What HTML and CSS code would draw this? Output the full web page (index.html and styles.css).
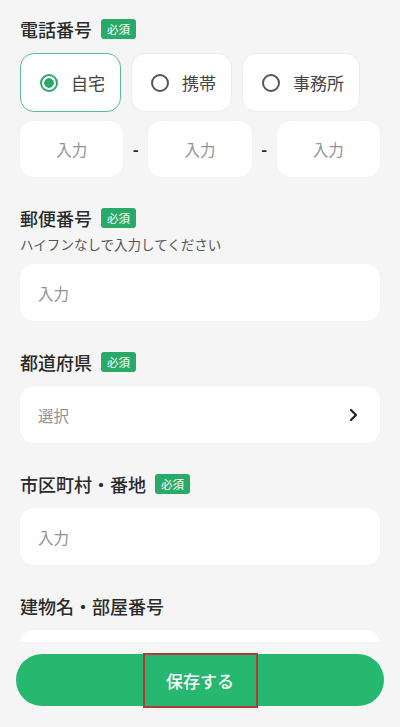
FILE: index.html
```html
<!DOCTYPE html>
<html lang="ja">
<head>
  <meta charset="UTF-8">
  <meta name="viewport" content="width=device-width, initial-scale=1.0">
  <title>住所・電話番号の登録</title>
  <link rel="stylesheet" href="styles.css">
</head>
<body>
  <div class="form">
    <div class="field field-phone">
      <div class="label">電話番号 <span class="badge">必須</span></div>
      <div class="radio-row">
        <div class="radio-card selected"><span class="radio"></span>自宅</div>
        <div class="radio-card"><span class="radio"></span>携帯</div>
        <div class="radio-card"><span class="radio"></span>事務所</div>
      </div>
      <div class="phone-row">
        <div class="input center">入力</div>
        <span class="dash">-</span>
        <div class="input center">入力</div>
        <span class="dash">-</span>
        <div class="input center">入力</div>
      </div>
    </div>

    <div class="field">
      <div class="label">郵便番号 <span class="badge">必須</span></div>
      <div class="hint">ハイフンなしで入力してください</div>
      <div class="input">入力</div>
    </div>

    <div class="field">
      <div class="label">都道府県 <span class="badge">必須</span></div>
      <div class="input select">
        選択
        <svg width="12" height="14" viewBox="0 0 12 14"><path d="M3 2l5 5-5 5" fill="none" stroke="#222" stroke-width="2.2" stroke-linecap="round" stroke-linejoin="round"/></svg>
      </div>
    </div>

    <div class="field">
      <div class="label">市区町村・番地 <span class="badge">必須</span></div>
      <div class="input">入力</div>
    </div>

    <div class="field">
      <div class="label">建物名・部屋番号</div>
      <div class="input">入力</div>
    </div>
  </div>

  <div class="footer">
    <button class="save-btn"><span class="save-text">保存する</span></button>
  </div>
</body>
</html>
```

FILE: styles.css
```css
html, body {
  height: 100%;
}

body {
  margin: 0;
  background: #f5f5f5;
  font-family: "Noto Sans CJK JP", "Noto Sans", sans-serif;
  color: #333;
  overflow: hidden;
}

.form {
  padding: 17px 20px 0;
}

.field {
  margin-bottom: 29px;
}

.label {
  display: flex;
  align-items: center;
  gap: 9px;
  height: 24px;
  font-size: 18px;
  font-weight: 500;
  color: #2a2a2a;
  margin-bottom: 12px;
}

.badge {
  display: inline-block;
  background: #2aaa68;
  color: #fff;
  font-size: 11.5px;
  font-weight: 400;
  line-height: 20px;
  padding: 0 6px;
  border-radius: 3px;
}

.hint {
  font-size: 13.5px;
  line-height: 20px;
  color: #555;
  margin-top: -8px;
  margin-bottom: 10px;
}

.radio-row {
  display: flex;
  gap: 10px;
  margin-bottom: 9px;
}

.radio-card {
  height: 59px;
  box-sizing: border-box;
  display: flex;
  align-items: center;
  gap: 13px;
  padding: 0 15px 0 19px;
  background: #fff;
  border: 1px solid #ececec;
  border-radius: 14px;
  font-size: 17px;
  color: #444;
}

.radio-card.selected {
  border: 1.5px solid #5cbc96;
}

.radio {
  width: 18px;
  height: 18px;
  box-sizing: border-box;
  border: 2px solid #555;
  border-radius: 50%;
}

.selected .radio {
  border-color: #2aaa68;
  background: radial-gradient(circle, #2aaa68 0 4.5px, #fff 5px);
}

.phone-row {
  display: flex;
  align-items: center;
}

.phone-row .input {
  flex: 1;
}

.dash {
  width: 25px;
  text-align: center;
  font-size: 16px;
  font-weight: 700;
  color: #222;
}

.input {
  height: 57px;
  box-sizing: border-box;
  display: flex;
  align-items: center;
  padding: 0 18px;
  background: #fff;
  border-radius: 14px;
  font-size: 15.5px;
  color: #929292;
  box-shadow: 0 0 2px rgba(0, 0, 0, 0.03);
}

.input.center {
  justify-content: center;
  padding: 0;
  height: 56px;
}

.select {
  justify-content: space-between;
  padding-right: 20px;
}

.footer {
  position: fixed;
  left: 0;
  right: 0;
  bottom: 0;
  height: 85px;
  background: #f5f5f5;
  padding: 12px 16px 0;
  box-sizing: border-box;
}

.save-btn {
  width: 100%;
  height: 52px;
  border: none;
  border-radius: 26px;
  background: #27b870;
  display: flex;
  align-items: center;
  justify-content: center;
  padding: 0;
  font-family: inherit;
}

.save-text {
  display: flex;
  align-items: center;
  justify-content: center;
  width: 115px;
  height: 55px;
  box-sizing: border-box;
  border: 2px solid #b3393c;
  font-size: 17px;
  color: #fff;
  font-weight: 500;
}
```
